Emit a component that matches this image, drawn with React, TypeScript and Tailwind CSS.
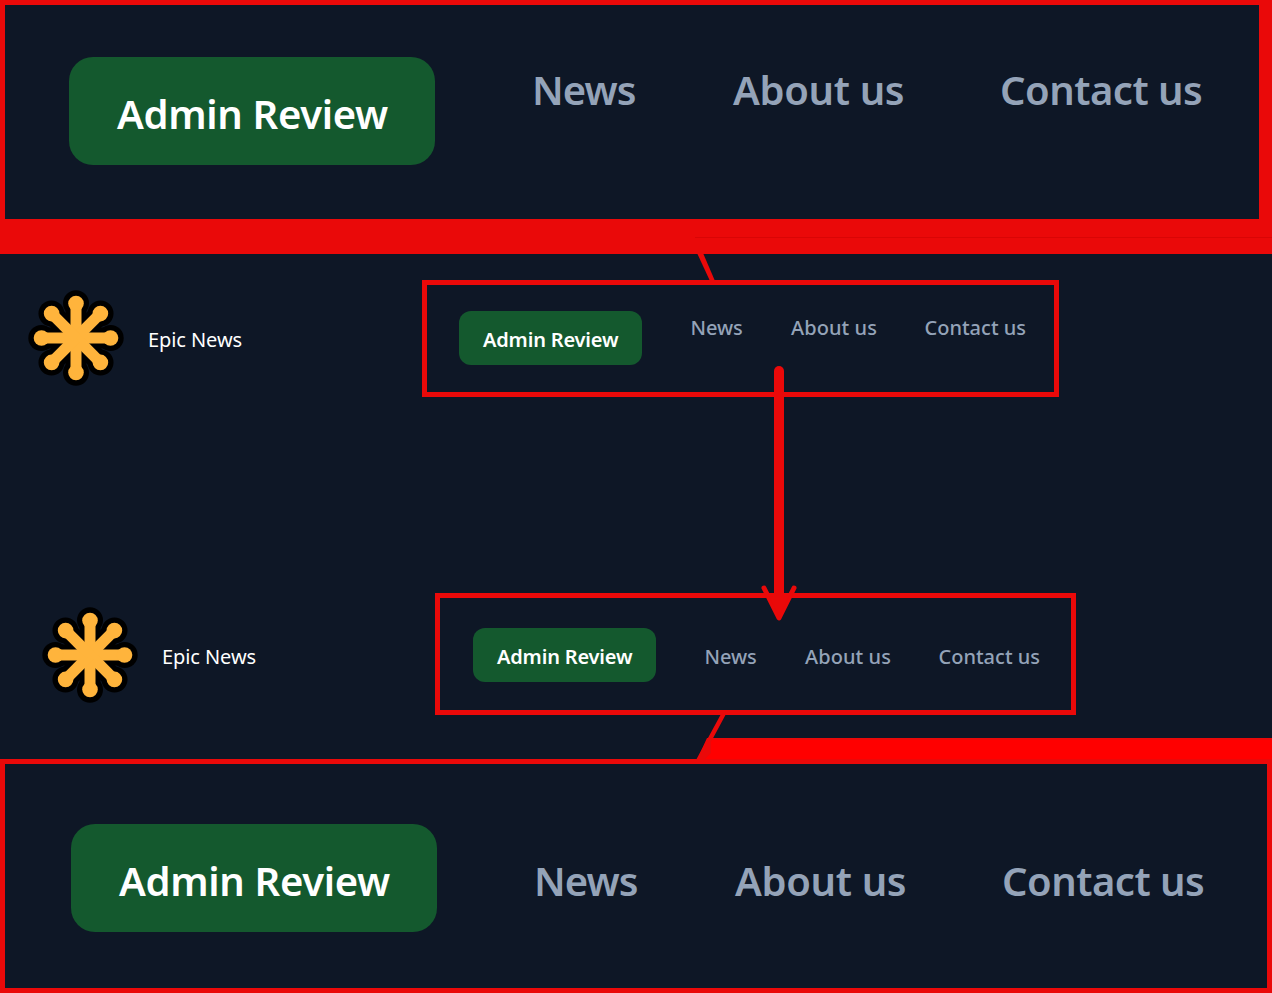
import type { ReactNode } from "react";

const angles = [0, 45, 90, 135, 180, 225, 270, 315];

function Logo() {
  return (
    <svg width="96" height="96" viewBox="-48 -48 96 96" className="shrink-0">
      <g fill="#000" stroke="#000">
        {angles.map((a) => (
          <g key={a} transform={`rotate(${a})`}>
            <line x1="0" y1="0" x2="0" y2="-34.5" strokeWidth="21" />
            <circle cx="0" cy="-34.7" r="13" stroke="none" />
          </g>
        ))}
      </g>
      <g fill="#ffb43c" stroke="#ffb43c">
        {angles.map((a) => (
          <g key={a} transform={`rotate(${a})`}>
            <line x1="0" y1="0" x2="0" y2="-34" strokeWidth="11" />
            <circle cx="0" cy="-34.5" r="7.8" stroke="none" />
          </g>
        ))}
      </g>
    </svg>
  );
}

function SmallNav({ className, linkClass }: { className: string; linkClass: string }) {
  const link = "font-medium text-[#94a3b8]";
  return (
    <nav className={`flex border-[5px] border-[#ea0909] text-[20px] leading-[30px] whitespace-nowrap ${className}`}>
      <button className="flex h-[54px] w-[183px] shrink-0 items-center rounded-xl bg-[#14592e] pt-[3px] pl-6 font-semibold text-white">
        <span className="tracking-[-0.17px]">Admin Review</span>
      </button>
      <div className={`ml-[48.5px] flex ${linkClass}`}>
        <a className={`w-[100.5px] tracking-[-0.1px] ${link}`}>News</a>
        <a className={`w-[133.5px] tracking-[0.08px] ${link}`}>About us</a>
        <a className={link}>Contact us</a>
      </div>
    </nav>
  );
}

function LargeNav({ linkClass }: { linkClass: string }) {
  const link = "font-semibold text-[#94a3b8]";
  return (
    <nav className="flex text-[40px] leading-[60px] whitespace-nowrap">
      <button className="flex h-[108px] w-[366px] shrink-0 items-center rounded-3xl bg-[#14592e] pt-[6px] pl-12 font-semibold text-white">
        <span className="tracking-[-0.33px]">Admin Review</span>
      </button>
      <div className={`ml-[97px] flex ${linkClass}`}>
        <a className={`w-[201px] tracking-[-0.9px] ${link}`}>News</a>
        <a className={`w-[267px] tracking-[-0.35px] ${link}`}>About us</a>
        <a className={`tracking-[-0.5px] ${link}`}>Contact us</a>
      </div>
    </nav>
  );
}

function Header({ className, children }: { className: string; children: ReactNode }) {
  return (
    <header className={`flex ${className}`}>
      <div className="flex h-24 items-center gap-6">
        <Logo />
        <span className="w-[100px] pt-[3px] text-[20px] leading-[30px] tracking-[-0.08px] whitespace-nowrap text-white">Epic News</span>
      </div>
      {children}
    </header>
  );
}

export default function App() {
  return (
    <div className="relative flex h-[993px] w-[1272px] flex-col overflow-hidden bg-[#0e1726] font-['Noto_Sans',sans-serif]">
      <section className="h-[254px] shrink-0 border-t-[5px] border-r-[13px] border-b-[35px] border-l-[5px] border-[#ea0909] pt-[52px] pl-16">
        <LargeNav linkClass="pt-[3px]" />
      </section>
      <main className="h-[505px] shrink-0 pt-[26px]">
        <Header className="h-[313px] pt-[10px] pl-7">
          <SmallNav className="-mt-[10px] ml-[174px] h-[117px] w-[637px] pt-[26px] pl-8" linkClass="pt-[2px]" />
        </Header>
        <Header className="pt-[14px] pl-[42px]">
          <SmallNav className="-mt-[14px] ml-[173px] h-[122px] w-[641px] pt-[30px] pl-[33px]" linkClass="pt-[14px]" />
        </Header>
      </main>
      <section className="h-[234px] shrink-0 border-[5px] border-[#ea0909] pt-[60px] pl-[66px]">
        <LargeNav linkClass="pt-[27px]" />
      </section>
      <svg width="1272" height="993" viewBox="0 0 1272 993" className="pointer-events-none absolute inset-0">
        <rect x="695" y="237" width="577" height="1" fill="#d90505" />
        <path d="M697 253L710 281H715L703 253Z" fill="#ea0909" />
        <path d="M707 738H1272V760H697Z" fill="#ff0000" />
        <path d="M712 738H1272V740H711Z" fill="#ea0909" />
        <path d="M721 714H726L711 742V753L704 760H696Z" fill="#ea0909" />
        <path d="M700 759H1272V764H700Z" fill="#ea0909" />
        <path d="M779 371V600" stroke="#ea0909" strokeWidth="10" strokeLinecap="round" />
        <path d="M764 588L779 618L794 588" fill="none" stroke="#ea0909" strokeWidth="5" strokeLinecap="round" strokeLinejoin="round" />
        <path d="M768 594H790L779 617Z" fill="#ea0909" />
      </svg>
    </div>
  );
}
